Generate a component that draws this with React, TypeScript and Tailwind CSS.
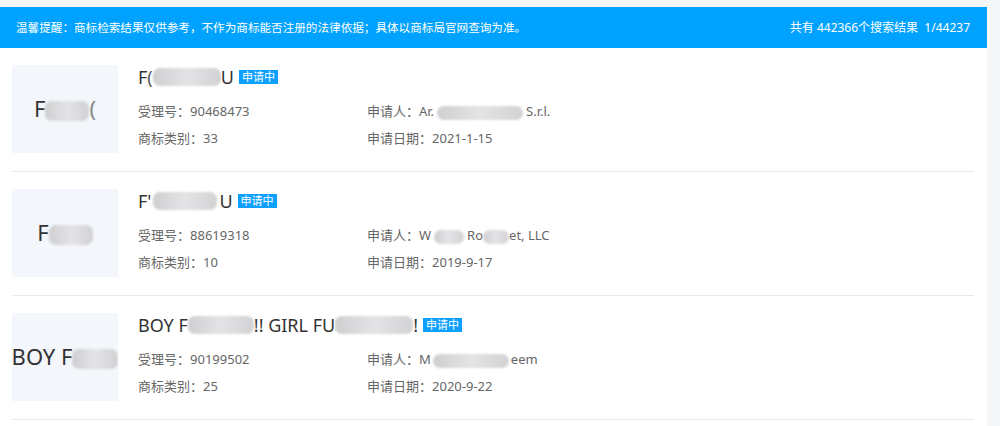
import { FC, ReactNode } from 'react'

// censored text block
const Blur: FC<{ w: number; h?: number; className?: string }> = ({ w, h = 16, className = '' }) => (
  <span
    className={`inline-block align-middle rounded-[7px] blur-[1px] bg-gradient-to-r from-[#cfcfd1] via-[#e4e4e6] to-[#d2d2d4] ${className}`}
    style={{ width: w, height: h }}
  />
)

type Item = {
  logo: ReactNode
  title: ReactNode
  no: string
  applicant: ReactNode
  cls: string
  date: string
}

const items: Item[] = [
  {
    logo: (
      <span className="whitespace-nowrap">
        F<Blur w={44} h={20} />
        <span className="text-[#888]">(</span>
      </span>
    ),
    title: (
      <>
        F<span className="text-[#555]">(</span>
        <Blur w={68} h={18} />U
      </>
    ),
    no: '90468473',
    applicant: (
      <>
        Ar.<Blur w={86} h={14} className="mx-[3px]" />S.r.l.
      </>
    ),
    cls: '33',
    date: '2021-1-15',
  },
  {
    logo: (
      <span className="whitespace-nowrap">
        F<Blur w={44} h={20} />
      </span>
    ),
    title: (
      <>
        F'<Blur w={64} h={18} className="mx-[2px]" />U
      </>
    ),
    no: '88619318',
    applicant: (
      <>
        W<Blur w={30} h={14} className="mx-[3px]" />Ro<Blur w={26} h={14} />et, LLC
      </>
    ),
    cls: '10',
    date: '2019-9-17',
  },
  {
    logo: (
      <span className="whitespace-nowrap">
        BOY F<Blur w={46} h={20} />
      </span>
    ),
    title: (
      <>
        BOY F<Blur w={66} h={18} />!! GIRL FU<Blur w={78} h={18} />!
      </>
    ),
    no: '90199502',
    applicant: (
      <>
        M<Blur w={76} h={14} className="mx-[2px]" />eem
      </>
    ),
    cls: '25',
    date: '2020-9-22',
  },
]

const App: FC = () => {
  return (
    <div
      className="w-[1000px] h-[426px] overflow-hidden bg-[#f5f6f8] pt-[7px] flex"
      style={{ fontFamily: '"Noto Sans", "Noto Sans CJK SC", sans-serif' }}
    >
      <div className="w-[987px] bg-white">
        {/* Notice bar */}
        <div className="h-[41px] bg-[#00a2ff] flex items-center justify-between pl-[16px] pr-[17px] text-white text-[11.6px]">
          <span>温馨提醒：商标检索结果仅供参考，不作为商标能否注册的法律依据；具体以商标局官网查询为准。</span>
          <span className="text-[12px]">共有 442366个搜索结果&nbsp;&nbsp;1/44237</span>
        </div>

        {/* Result list */}
        <div className="pl-[12px] pr-[13px]">
          {items.map((it, i) => (
            <div key={i} className="flex pt-[17px] pb-[18px] border-b border-[#e8e8e8]">
              <div className="w-[106px] h-[88px] bg-[#f3f6fb] flex items-center justify-center overflow-hidden text-[22px] text-[#333] leading-none">
                {it.logo}
              </div>
              <div className="ml-[20px] flex-1">
                <div className="flex items-center h-[24px] text-[18px] text-[#333] whitespace-nowrap">
                  {it.title}
                  <span className="ml-[5px] bg-[#0ea0ff] text-white text-[11px] leading-[14px] px-[3px]">申请中</span>
                </div>
                <div className="mt-[9px] grid grid-cols-[229px_1fr] text-[13px] text-[#666] leading-[27px]">
                  <div>受理号：{it.no}</div>
                  <div className="whitespace-nowrap">申请人：{it.applicant}</div>
                  <div>商标类别：{it.cls}</div>
                  <div>申请日期：{it.date}</div>
                </div>
              </div>
            </div>
          ))}
        </div>
      </div>
    </div>
  )
}

export default App
